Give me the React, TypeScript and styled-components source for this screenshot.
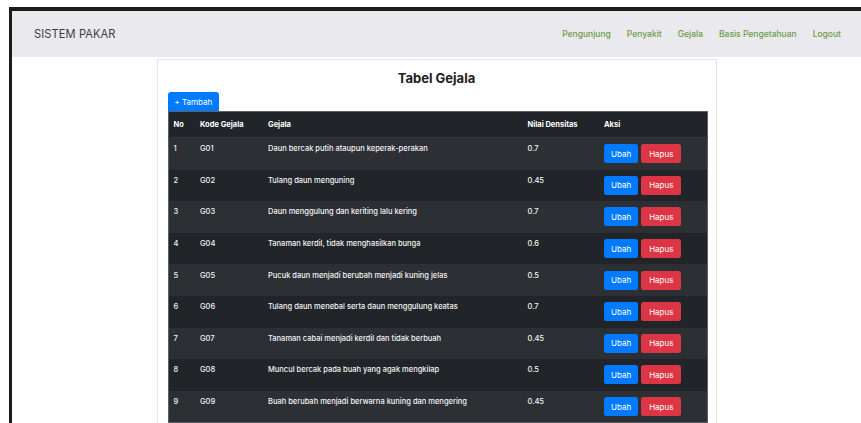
import React from "react";
import styled, { createGlobalStyle } from "styled-components";

const GlobalStyle = createGlobalStyle`
  html, body {
    margin: 0;
    padding: 0;
    background: #ffffff;
  }
  body {
    font-family: Inter, "Open Sans", "Liberation Sans", sans-serif;
    -webkit-font-smoothing: antialiased;
  }
  * {
    box-sizing: border-box;
  }
`;

const Frame = styled.div`
  margin: 7px 0 0 9px;
  border-top: 4px solid #1b1b1b;
  border-left: 3px solid #1b1b1b;
  min-height: calc(100vh - 7px);
  background: #ffffff;
`;

const NavBar = styled.nav`
  height: 46px;
  background: #e9e9ee;
  display: flex;
  align-items: center;
  justify-content: space-between;
  padding: 0 12px 0 22px;
`;

const Brand = styled.span`
  font-size: 11.1px;
  color: #3d3d3d;
  letter-spacing: 0.1px;
`;

const NavLinks = styled.ul`
  display: flex;
  align-items: center;
  list-style: none;
  margin: 0;
  padding: 0;
`;

const NavLink = styled.li`
  padding: 0 8px;
  font-size: 8.5px;
  font-weight: 500;
  color: #6e9b44;
`;

const Main = styled.main`
  padding-top: 2px;
`;

const Card = styled.section`
  width: 560px;
  margin: 0 auto;
  border: 1px solid #e4e4e4;
  padding: 8px 10px 0;
  background: #ffffff;
`;

const Title = styled.h2`
  margin: 0 0 4px;
  text-align: center;
  font-size: 13px;
  line-height: 20px;
  font-weight: 700;
  color: #212121;
`;

const AddButton = styled.button`
  display: flex;
  align-items: center;
  width: fit-content;
  height: 19px;
  padding: 0 7px;
  border: none;
  border-radius: 3px 3px 0 0;
  background: #007bff;
  color: #ffffff;
  font-family: inherit;
  font-size: 8px;
  cursor: pointer;
`;

const Table = styled.table`
  width: 539px;
  table-layout: fixed;
  border-collapse: collapse;
  background: #212529;
  color: #ffffff;
  border: 1px solid #5b6167;
`;

const HeadCell = styled.th<{ $w: number }>`
  width: ${(p) => p.$w}px;
  text-align: left;
  vertical-align: top;
  padding: 7px 5px;
  font-size: 7.5px;
  line-height: 11px;
  font-weight: 700;
  border-bottom: 1px solid #32383e;
`;

const Row = styled.tr<{ $striped: boolean }>`
  background: ${(p) => (p.$striped ? "#2c3034" : "#212529")};
`;

const Cell = styled.td`
  vertical-align: top;
  padding: 6.3px 5px;
  font-size: 7.5px;
  line-height: 10.5px;
  font-weight: 500;
  color: #f4f4f4;
  white-space: nowrap;
`;

const Actions = styled.div`
  display: flex;
  gap: 3px;
`;

const ActionButton = styled.button<{ $tone: "edit" | "delete" }>`
  height: 19px;
  padding: 0 ${(p) => (p.$tone === "edit" ? 7 : 8)}px;
  border: none;
  border-radius: 2.5px;
  background: ${(p) => (p.$tone === "edit" ? "#007bff" : "#dc3545")};
  color: #ffffff;
  font-family: inherit;
  font-size: 8px;
  cursor: pointer;
`;

const columns = [
  { label: "No", width: 27 },
  { label: "Kode Gejala", width: 68 },
  { label: "Gejala", width: 259.5 },
  { label: "Nilai Densitas", width: 76.5 },
  { label: "Aksi", width: 108 },
];

const gejala = [
  { kode: "G01", nama: "Daun bercak putih ataupun keperak-perakan", nilai: "0.7" },
  { kode: "G02", nama: "Tulang daun menguning", nilai: "0.45" },
  { kode: "G03", nama: "Daun menggulung dan keriting lalu kering", nilai: "0.7" },
  { kode: "G04", nama: "Tanaman kerdil, tidak menghasilkan bunga", nilai: "0.6" },
  { kode: "G05", nama: "Pucuk daun menjadi berubah menjadi kuning jelas", nilai: "0.5" },
  { kode: "G06", nama: "Tulang daun menebal serta daun menggulung keatas", nilai: "0.7" },
  { kode: "G07", nama: "Tanaman cabai menjadi kerdil dan tidak berbuah", nilai: "0.45" },
  { kode: "G08", nama: "Muncul bercak pada buah yang agak mengkilap", nilai: "0.5" },
  { kode: "G09", nama: "Buah berubah menjadi berwarna kuning dan mengering", nilai: "0.45" },
];

const menu = ["Pengunjung", "Penyakit", "Gejala", "Basis Pengetahuan", "Logout"];

export default function App() {
  return (
    <>
      <GlobalStyle />
      <Frame>
        <NavBar>
          <Brand>SISTEM PAKAR</Brand>
          <NavLinks>
            {menu.map((m) => (
              <NavLink key={m}>{m}</NavLink>
            ))}
          </NavLinks>
        </NavBar>
        <Main>
          <Card>
            <Title>Tabel Gejala</Title>
            <AddButton>+ Tambah</AddButton>
            <Table>
              <thead>
                <tr>
                  {columns.map((c) => (
                    <HeadCell key={c.label} $w={c.width}>
                      {c.label}
                    </HeadCell>
                  ))}
                </tr>
              </thead>
              <tbody>
                {gejala.map((g, i) => (
                  <Row key={g.kode} $striped={i % 2 === 0}>
                    <Cell>{i + 1}</Cell>
                    <Cell>{g.kode}</Cell>
                    <Cell>{g.nama}</Cell>
                    <Cell>{g.nilai}</Cell>
                    <Cell>
                      <Actions>
                        <ActionButton $tone="edit">Ubah</ActionButton>
                        <ActionButton $tone="delete">Hapus</ActionButton>
                      </Actions>
                    </Cell>
                  </Row>
                ))}
              </tbody>
            </Table>
          </Card>
        </Main>
      </Frame>
    </>
  );
}
